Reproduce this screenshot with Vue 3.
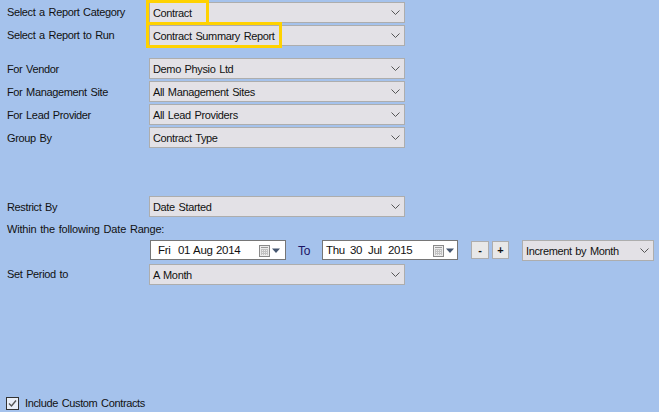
<script setup>
const vendorRows = [
  { label: 'For Vendor', value: 'Demo Physio Ltd' },
  { label: 'For Management Site', value: 'All Management Sites' },
  { label: 'For Lead Provider', value: 'All Lead Providers' },
  { label: 'Group By', value: 'Contract Type' }
]
</script>

<template>
  <div class="page">
    <section class="group">
      <div class="row">
        <label class="lbl">Select a Report Category</label>
        <div class="select"><span class="val">Contract</span>
          <svg class="chev" width="9" height="5" viewBox="0 0 9 5"><path d="M.5.5 4.5 4.5 8.5.5" fill="none" stroke="#555" /></svg>
          <i class="mark mark-a"></i>
        </div>
      </div>
      <div class="row">
        <label class="lbl">Select a Report to Run</label>
        <div class="select"><span class="val">Contract Summary Report</span>
          <svg class="chev" width="9" height="5" viewBox="0 0 9 5"><path d="M.5.5 4.5 4.5 8.5.5" fill="none" stroke="#555" /></svg>
          <i class="mark mark-b"></i>
        </div>
      </div>
    </section>

    <section class="group second">
      <div class="row" v-for="r in vendorRows" :key="r.label">
        <label class="lbl low">{{ r.label }}</label>
        <div class="select"><span class="val">{{ r.value }}</span>
          <svg class="chev" width="9" height="5" viewBox="0 0 9 5"><path d="M.5.5 4.5 4.5 8.5.5" fill="none" stroke="#555" /></svg>
        </div>
      </div>
    </section>

    <section class="group third">
      <div class="row">
        <label class="lbl low">Restrict By</label>
        <div class="select"><span class="val">Date Started</span>
          <svg class="chev" width="9" height="5" viewBox="0 0 9 5"><path d="M.5.5 4.5 4.5 8.5.5" fill="none" stroke="#555" /></svg>
        </div>
      </div>
      <div class="range-label">Within the following Date Range:</div>
      <div class="dates">
        <div class="date from">
          <span class="d-day">Fri</span><span class="d-num">01</span><span class="d-mon">Aug</span><span>2014</span>
          <svg class="cal" width="22" height="12" viewBox="0 0 22 12">
            <rect x=".5" y=".5" width="10" height="11" fill="#ececec" stroke="#8a8a8a" />
            <path d="M2 2.5h7" stroke="#9a9a9a" />
            <path d="M2.5 4v6M4.5 4v6M6.5 4v6M8.5 4v6M2 4.5h7M2 6.5h7M2 8.5h7" stroke="#c2c2c2" />
            <path d="M13 3.5h8l-4 4.5z" fill="#44556f" />
          </svg>
        </div>
        <span class="to">To</span>
        <div class="date until">
          <span class="d-day">Thu</span><span class="d-num">30</span><span class="d-mon">Jul</span><span>2015</span>
          <svg class="cal" width="22" height="12" viewBox="0 0 22 12">
            <rect x=".5" y=".5" width="10" height="11" fill="#ececec" stroke="#8a8a8a" />
            <path d="M2 2.5h7" stroke="#9a9a9a" />
            <path d="M2.5 4v6M4.5 4v6M6.5 4v6M8.5 4v6M2 4.5h7M2 6.5h7M2 8.5h7" stroke="#c2c2c2" />
            <path d="M13 3.5h8l-4 4.5z" fill="#44556f" />
          </svg>
        </div>
        <button class="step minus">-</button>
        <button class="step plus">+</button>
        <div class="select inc"><span class="val">Increment by Month</span>
          <svg class="chev" width="9" height="5" viewBox="0 0 9 5"><path d="M.5.5 4.5 4.5 8.5.5" fill="none" stroke="#555" /></svg>
        </div>
      </div>
      <div class="row period">
        <label class="lbl">Set Period to</label>
        <div class="select"><span class="val">A Month</span>
          <svg class="chev" width="9" height="5" viewBox="0 0 9 5"><path d="M.5.5 4.5 4.5 8.5.5" fill="none" stroke="#555" /></svg>
        </div>
      </div>
    </section>

    <footer class="foot">
      <span class="check">
        <svg width="11" height="11" viewBox="0 0 11 11"><path d="M2 5.5 4.5 8 9 2.5" fill="none" stroke="#555" stroke-width="1.4" /></svg>
      </span>
      <span>Include Custom Contracts</span>
    </footer>
  </div>
</template>

<style>
html, body { margin: 0; background: #a5c2ec; }
</style>

<style scoped>
.page {
  box-sizing: border-box;
  width: 659px;
  height: 412px;
  overflow: hidden;
  display: flex;
  flex-direction: column;
  padding: 2px 5px 2px 7px;
  background: #a5c2ec;
  color: #111;
  font: 11px/13px "Liberation Sans", Arial, sans-serif;
  letter-spacing: -0.36px;
  word-spacing: 1px;
}
.group { display: flex; flex-direction: column; gap: 2px; }
.second { margin-top: 12px; }
.third { margin-top: 48px; gap: 0; }
.row { display: grid; grid-template-columns: 142px 256px; align-items: center; height: 21px; }
.lbl { display: block; }
.low { padding-top: 2px; }
.select {
  position: relative;
  box-sizing: border-box;
  display: flex;
  align-items: center;
  justify-content: space-between;
  height: 21px;
  padding: 0 4px 0 3px;
  background: #e3e1e6;
  border: 1px solid #adadad;
}
.val { padding-top: 2px; }
.chev { flex: none; }
.mark { position: absolute; border: 3px solid #ffd200; box-sizing: border-box; pointer-events: none; }
.mark-a { left: -4px; top: -3px; width: 63px; height: 25px; }
.mark-b { left: -4px; top: -4px; width: 136px; height: 26px; }
.range-label { margin-top: 6px; height: 17px; letter-spacing: -0.2px; }
.dates { display: flex; align-items: flex-start; height: 21px; margin-left: 143px; }
.date {
  box-sizing: border-box;
  position: relative;
  display: flex;
  align-items: center;
  height: 20px;
  width: 136px;
  padding-left: 7px;
  background: #fff;
  border: 1px solid #767676;
  font-size: 11.5px;
  letter-spacing: -0.28px;
}
.until { padding-left: 3px; }
.d-day { width: 20px; }
.d-num { width: 15px; }
.d-mon { width: 23px; }
.until .d-day { width: 24px; }
.until .d-num { width: 18px; }
.until .d-mon { width: 20px; }
.cal { position: absolute; right: 4px; top: 4px; }
.until .cal { right: 2px; }
.to { width: 36px; text-align: center; color: #1b1464; font-size: 12px; line-height: 22px; }
.step {
  box-sizing: border-box;
  width: 18px;
  height: 18px;
  margin: 1px 0 0 3px;
  padding: 0;
  background: #e8e8e8;
  border: 1px solid #adadad;
  font: bold 11px/15px "Liberation Sans", Arial, sans-serif;
  color: #111;
}
.minus { margin-left: 13px; }
.plus { width: 17px; }
.inc { width: 132px; margin-left: 13px; flex: none; }
.period { margin-top: 3px; }
.foot {
  margin-top: auto;
  margin-left: -1px;
  display: flex;
  align-items: center;
  gap: 6px;
  height: 13px;
}
.check {
  box-sizing: border-box;
  width: 13px;
  height: 13px;
  display: flex;
  align-items: center;
  justify-content: center;
  background: #e9eef7;
  border: 1px solid #333;
}
</style>
